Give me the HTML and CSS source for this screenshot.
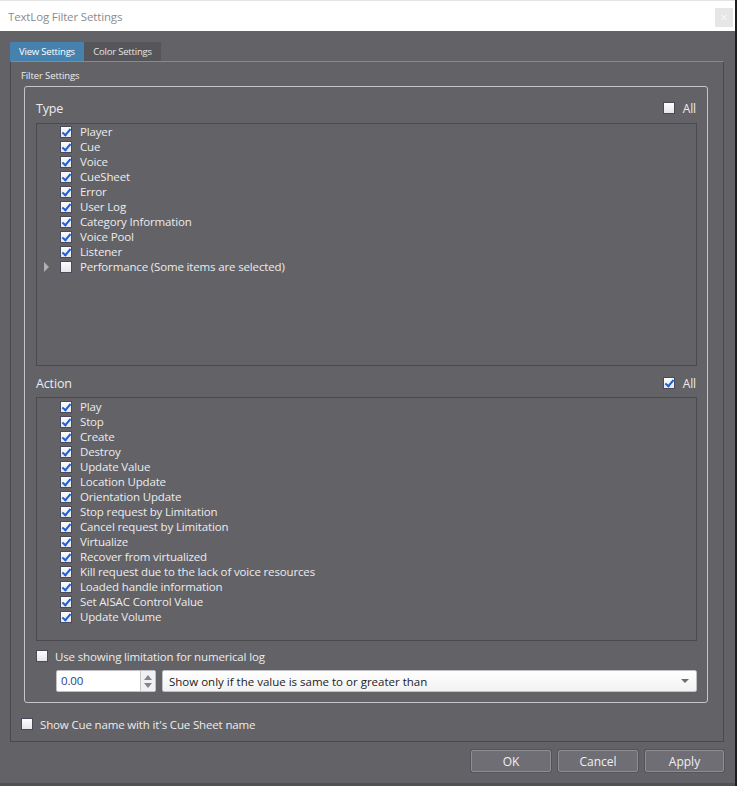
FILE: index.html
```html
<!DOCTYPE html>
<html lang="en">
<head>
    <meta charset="UTF-8">
    <title>TextLog Filter Settings</title>
    <link rel="stylesheet" href="styles.css">
</head>
<body>

<div class="window">
    <!-- Title bar -->
    <div class="titlebar">
        <span class="title">TextLog Filter Settings</span>
        <span class="close">&times;</span>
    </div>

    <div class="content">
        <!-- Tabs -->
        <div class="tabs">
            <div class="tab active">View Settings</div>
            <div class="tab">Color Settings</div>
        </div>

        <div class="tab-panel">
            <div class="panel-title">Filter Settings</div>

            <div class="group">
                <!-- Type -->
                <div class="section-head type-head">
                    <span class="section-name">Type</span>
                    <span class="all"><span class="cb"></span>All</span>
                </div>
                <ul class="list type-list">
                    <li><span class="exp"></span><span class="cb on"></span>Player</li>
                    <li><span class="exp"></span><span class="cb on"></span>Cue</li>
                    <li><span class="exp"></span><span class="cb on"></span>Voice</li>
                    <li><span class="exp"></span><span class="cb on"></span>CueSheet</li>
                    <li><span class="exp"></span><span class="cb on"></span>Error</li>
                    <li><span class="exp"></span><span class="cb on"></span>User Log</li>
                    <li><span class="exp"></span><span class="cb on"></span>Category Information</li>
                    <li><span class="exp"></span><span class="cb on"></span>Voice Pool</li>
                    <li><span class="exp"></span><span class="cb on"></span>Listener</li>
                    <li><span class="exp arrow"></span><span class="cb"></span>Performance (Some items are selected)</li>
                </ul>

                <!-- Action -->
                <div class="section-head action-head">
                    <span class="section-name">Action</span>
                    <span class="all"><span class="cb on"></span>All</span>
                </div>
                <ul class="list action-list">
                    <li><span class="exp"></span><span class="cb on"></span>Play</li>
                    <li><span class="exp"></span><span class="cb on"></span>Stop</li>
                    <li><span class="exp"></span><span class="cb on"></span>Create</li>
                    <li><span class="exp"></span><span class="cb on"></span>Destroy</li>
                    <li><span class="exp"></span><span class="cb on"></span>Update Value</li>
                    <li><span class="exp"></span><span class="cb on"></span>Location Update</li>
                    <li><span class="exp"></span><span class="cb on"></span>Orientation Update</li>
                    <li><span class="exp"></span><span class="cb on"></span>Stop request by Limitation</li>
                    <li><span class="exp"></span><span class="cb on"></span>Cancel request by Limitation</li>
                    <li><span class="exp"></span><span class="cb on"></span>Virtualize</li>
                    <li><span class="exp"></span><span class="cb on"></span>Recover from virtualized</li>
                    <li><span class="exp"></span><span class="cb on"></span>Kill request due to the lack of voice resources</li>
                    <li><span class="exp"></span><span class="cb on"></span>Loaded handle information</li>
                    <li><span class="exp"></span><span class="cb on"></span>Set AISAC Control Value</li>
                    <li><span class="exp"></span><span class="cb on"></span>Update Volume</li>
                </ul>

                <div class="check-row limit-row"><span class="cb"></span>Use showing limitation for numerical log</div>

                <div class="value-row">
                    <div class="spin">
                        <span class="spin-value">0.00</span>
                        <span class="spin-btns">
                            <span class="up"></span>
                            <span class="down"></span>
                        </span>
                    </div>
                    <div class="combo">
                        <span>Show only if the value is same to or greater than</span>
                        <span class="combo-arrow"></span>
                    </div>
                </div>
            </div>

            <div class="check-row cue-row"><span class="cb"></span>Show Cue name with it's Cue Sheet name</div>
        </div>

        <!-- Dialog buttons -->
        <div class="buttons">
            <button>OK</button>
            <button>Cancel</button>
            <button>Apply</button>
        </div>
    </div>
</div>

</body>
</html>
```

FILE: styles.css
```css
/* Global */
body {
    margin: 0;
    background-color: #1e1e20;
    font-family: "Open Sans", "Noto Sans", sans-serif;
    font-size: 11.5px;
    letter-spacing: -0.15px;
    color: #ececec;
}

.window {
    width: 735px;
    height: 786px;
    background-color: #636267;
    display: flex;
    flex-direction: column;
}

/* Title bar */
.titlebar {
    height: 31px;
    background: #fff;
    border-top: 1px solid #e4e4e4;
    box-sizing: border-box;
    display: flex;
    align-items: center;
    padding-left: 8px;
}

.title {
    flex: 1;
    color: #8c8c8c;
    font-size: 11.5px;
}

.close {
    align-self: flex-start;
    margin-top: 7px;
    margin-right: 2px;
    width: 18px;
    height: 19px;
    background: #e6e6e6;
    color: #fafafa;
    font-size: 13px;
    line-height: 19px;
    text-align: center;
}

.content {
    flex: 1;
    padding: 11px 0 0 10px;
    border-bottom: 3px solid #505055;
}

/* Tabs */
.tabs {
    display: flex;
    height: 19px;
}

.tab {
    font-size: 9.5px;
    letter-spacing: -0.2px;
    line-height: 19px;
    text-align: center;
    background: #56555a;
    color: #e4e4e4;
    width: 77px;
}

.tab.active {
    width: 74px;
    background: #4682ae;
    color: #fff;
}

.tab-panel {
    box-sizing: border-box;
    width: 714px;
    height: 681px;
    border: 1px solid #4a494e;
    border-top-color: #8a898e;
    padding-top: 6px;
}

.panel-title {
    font-size: 9.5px;
    letter-spacing: -0.1px;
    line-height: 16px;
    padding-left: 10px;
    margin-bottom: 2px;
}

/* Filter group */
.group {
    box-sizing: border-box;
    margin-left: 13px;
    width: 684px;
    border: 1px solid #c6c6ca;
    border-radius: 3px;
    padding: 0 10px 10px 11px;
}

.section-head {
    display: flex;
    align-items: center;
    justify-content: space-between;
    box-sizing: border-box;
}

.type-head {
    height: 36px;
    padding-top: 6px;
}

.action-head {
    height: 31px;
    padding-top: 3px;
}

.section-name {
    font-size: 12.5px;
}

.all {
    display: flex;
    align-items: center;
    gap: 8px;
    font-size: 12px;
    padding-right: 1px;
}

.list {
    list-style: none;
    margin: 0;
    padding: 0;
    box-sizing: border-box;
    border: 1px solid #4b4a4f;
}

.type-list {
    height: 243px;
}

.action-list {
    height: 244px;
    padding-top: 1px;
}

.list li {
    display: flex;
    align-items: center;
    height: 15px;
    padding-left: 7px;
    white-space: nowrap;
}

.list li .cb {
    margin-right: 8px;
}

.exp {
    width: 16px;
    height: 10px;
}

.exp.arrow {
    width: 0;
    height: 0;
    margin-right: 11px;
    border-top: 5px solid transparent;
    border-bottom: 5px solid transparent;
    border-left: 5px solid #b0b0b4;
}

/* Checkbox */
.cb {
    position: relative;
    flex: none;
    box-sizing: border-box;
    width: 12px;
    height: 12px;
    border: 1px solid #4a4a5c;
    background: linear-gradient(#fdfdfd, #e6e6ea);
}

.cb.on::after {
    content: '';
    position: absolute;
    left: 3px;
    top: 0;
    width: 3px;
    height: 7px;
    border: solid #1f5fd6;
    border-width: 0 2px 2px 0;
    transform: rotate(40deg);
}

.check-row {
    display: flex;
    align-items: center;
    height: 16px;
    font-size: 11.5px;
}

.check-row .cb {
    margin-right: 7px;
}

.limit-row {
    margin-top: 7px;
}

.cue-row {
    margin-top: 13px;
    padding-left: 10px;
}

/* Spin box and combo */
.value-row {
    display: flex;
    gap: 6px;
    margin: 6px 0 0 20px;
    height: 22px;
}

.spin {
    display: flex;
    width: 100px;
    border: 1px solid #c0c0c4;
    border-radius: 2px;
    background: #fff;
    box-sizing: border-box;
}

.spin-value {
    flex: 1;
    color: #1d3f8a;
    font-size: 11.5px;
    line-height: 20px;
    padding-left: 4px;
}

.spin-btns {
    width: 14px;
    border-left: 1px solid #c8c8cc;
    background: #f0f0f2;
    display: flex;
    flex-direction: column;
    align-items: center;
    justify-content: center;
    gap: 3px;
}

.up, .down {
    width: 0;
    height: 0;
    border-left: 4px solid transparent;
    border-right: 4px solid transparent;
}

.up {
    border-bottom: 5px solid #858589;
}

.down {
    border-top: 5px solid #858589;
}

.combo {
    flex: 1;
    display: flex;
    align-items: center;
    justify-content: space-between;
    box-sizing: border-box;
    border: 1px solid #c0c0c4;
    border-radius: 2px;
    background: linear-gradient(#ffffff, #f2f2f2);
    color: #222;
    font-size: 11.5px;
    letter-spacing: 0;
    padding: 0 7px 0 6px;
}

.combo-arrow {
    width: 0;
    height: 0;
    border-left: 4px solid transparent;
    border-right: 4px solid transparent;
    border-top: 4px solid #6e6e72;
}

/* Buttons */
.buttons {
    display: flex;
    justify-content: flex-end;
    gap: 7px;
    width: 714px;
    margin-top: 8px;
}

.buttons button {
    width: 80px;
    height: 22px;
    font-family: inherit;
    font-size: 12px;
    color: #f0f0f0;
    background: #6f6e74;
    border: 1px solid #8e8d93;
    border-radius: 2px;
    box-shadow: 0 0 0 1px #55545a;
    padding: 0;
}

.buttons button:last-child {
    width: 79px;
}
```
